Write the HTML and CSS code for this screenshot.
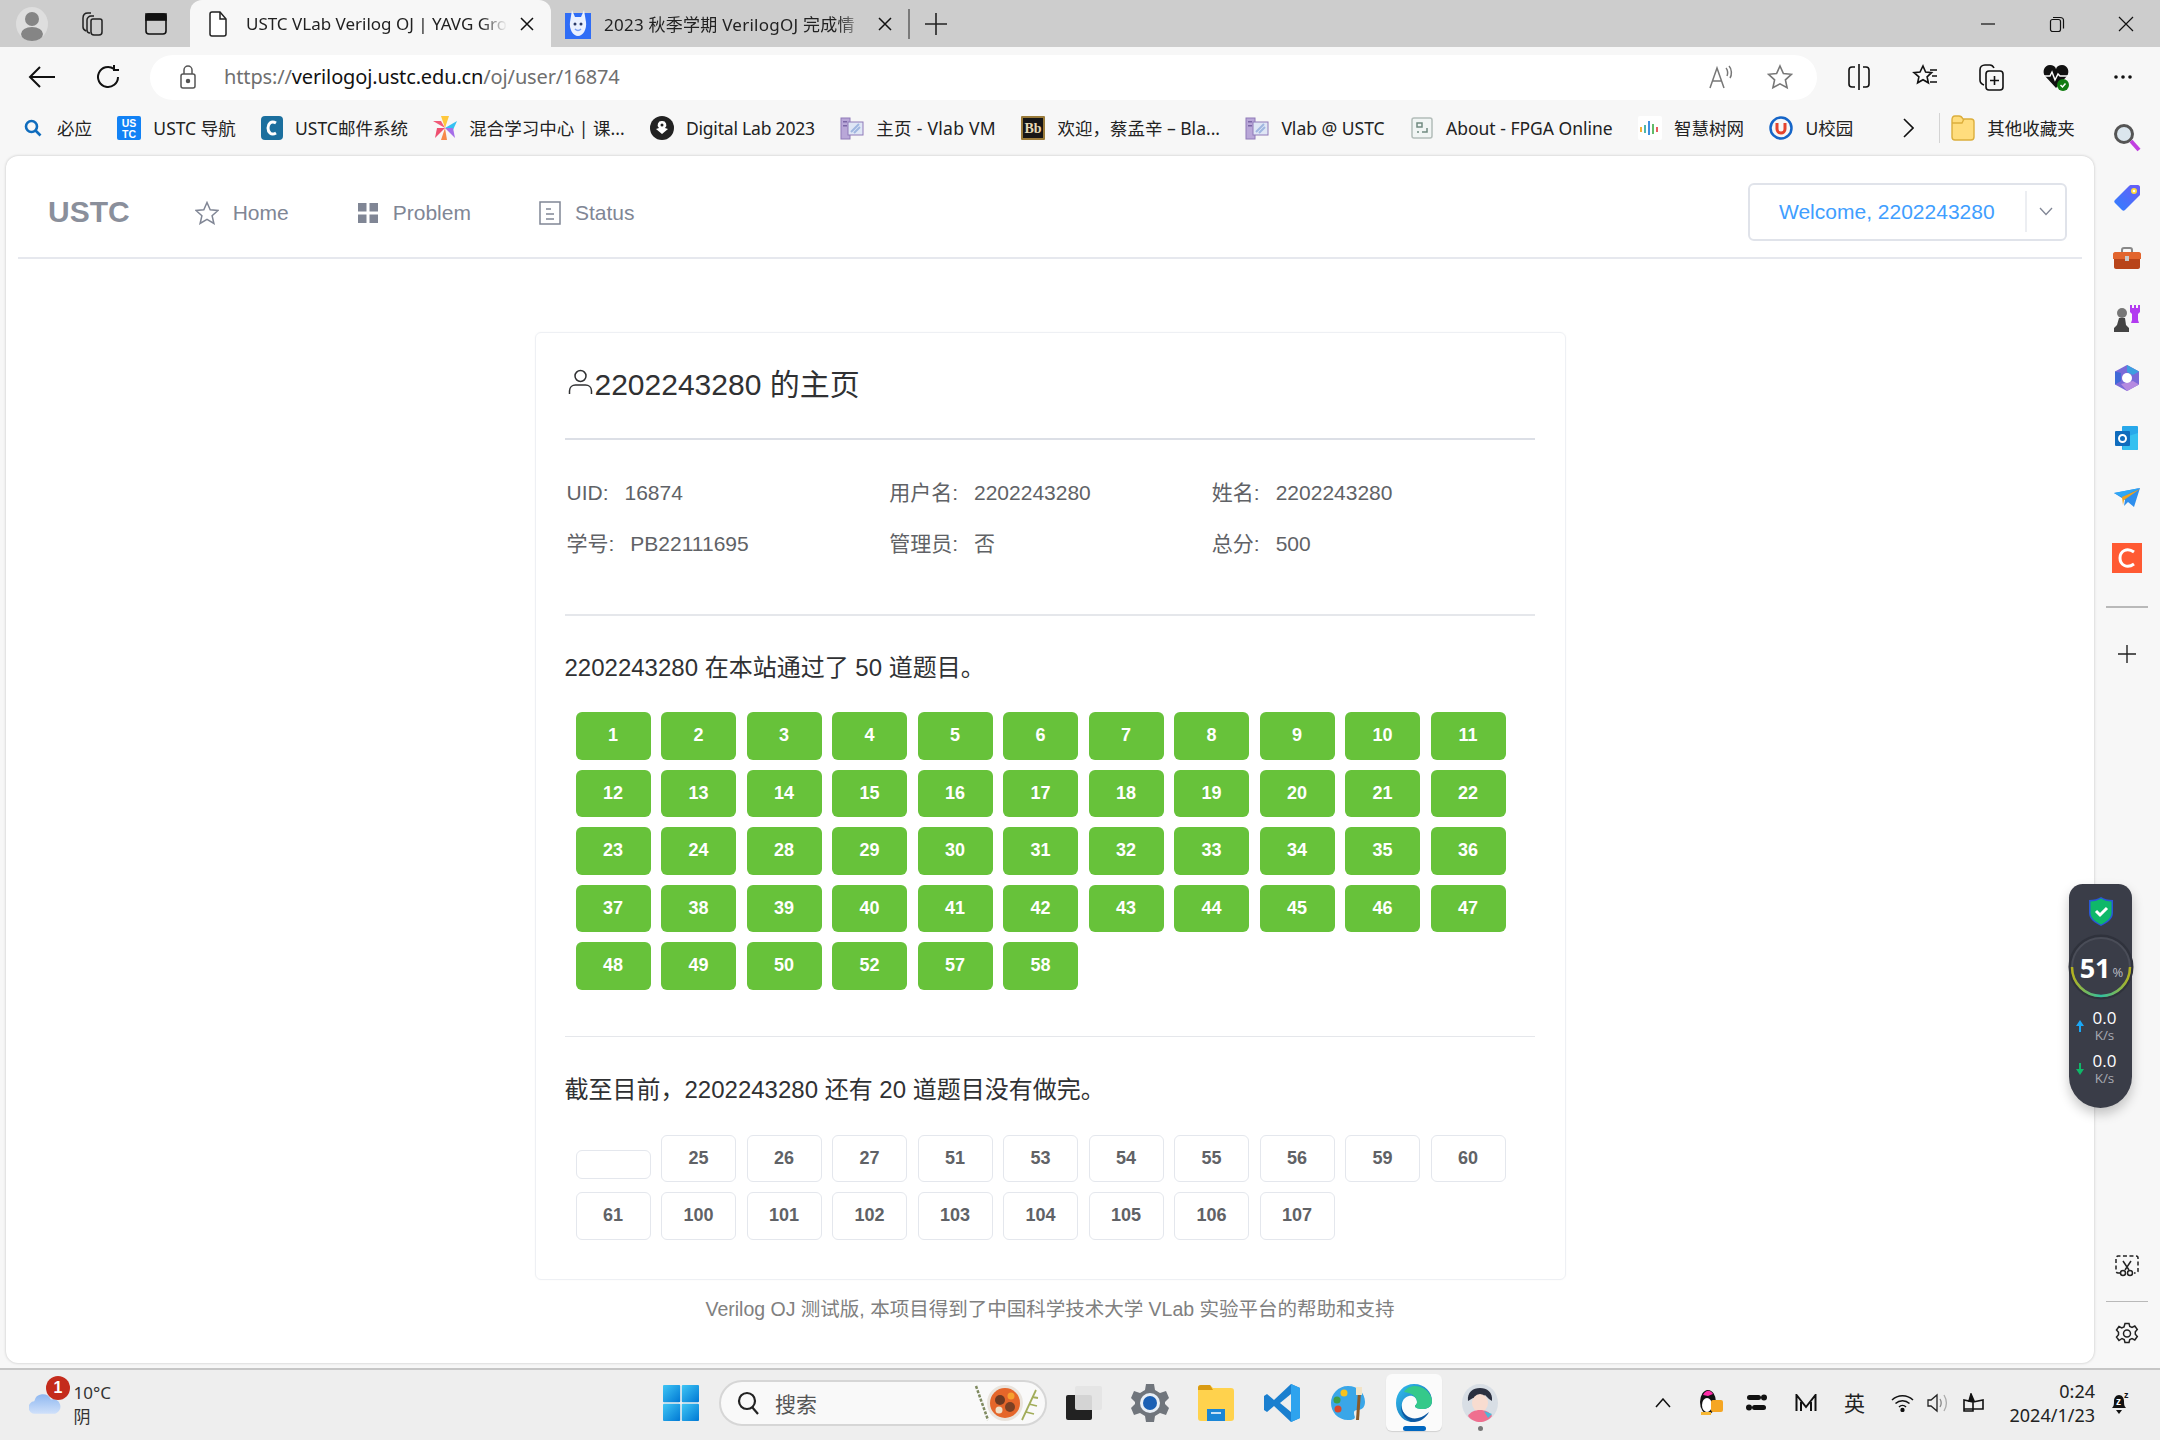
FILE: index.html
```html
<!DOCTYPE html>
<html lang="zh-CN">
<head>
<meta charset="utf-8">
<title>USTC VLab Verilog OJ</title>
<link rel="stylesheet" href="styles.css">
</head>
<body>
<svg class="defs" width="0" height="0">
  <symbol id="pc" viewBox="0 0 24 24"><rect x="1" y="2" width="9" height="21" fill="#b9a7d8" stroke="#8f7ab8"/><rect x="8" y="6" width="15" height="13" fill="#dfe6f5" stroke="#8f7ab8"/><path d="M11 16l8-8M14 17l6-6" stroke="#9fb6e0" stroke-width="2"/><rect x="3" y="5" width="4" height="1.5" fill="#7b66a6"/><rect x="3" y="9" width="4" height="1.5" fill="#7b66a6"/></symbol>
</svg>

<header class="tabbar">
  <div class="avatar"><svg width="32" height="34" viewBox="0 0 32 34"><ellipse cx="16" cy="17" rx="16" ry="17" fill="#dedede"/><circle cx="16" cy="12" r="7" fill="#858585"/><ellipse cx="16" cy="27" rx="11" ry="7" fill="#858585"/></svg></div>
  <svg class="tb-ic tabs-ic" width="24" height="26" viewBox="0 0 24 26" fill="none" stroke="#222" stroke-width="1.5"><path d="M3 7c0-3 2-5 5-5h3M3 7v9c0 2 1 3 3 4M7 9c0-2 2-4 4-4h3M7 9v10c0 2 1 3 3 3"/><path d="M11 10c0-1 1-2 2-2h7c1 0 2 1 2 2v11c0 2-1 3-3 3h-5c-2 0-3-1-3-3z"/></svg>
  <svg class="tb-ic win-ic" width="24" height="26" viewBox="0 0 24 26" fill="none" stroke="#111" stroke-width="1.6"><rect x="2" y="3" width="20" height="20" rx="3"/><rect x="2" y="3" width="20" height="6" fill="#111"/></svg>
  <div class="tab tab-active">
    <svg width="20" height="26" viewBox="0 0 20 26" fill="#fff" stroke="#222" stroke-width="1.5"><path d="M2 3c0-1 1-2 2-2h8l6 7v15c0 1-1 2-2 2H4c-1 0-2-1-2-2z"/><path d="M12 1v7h6" fill="none"/></svg>
    <span class="tab-title">USTC VLab Verilog OJ | YAVG Gro</span>
    <svg class="tab-x" width="14" height="14" viewBox="0 0 14 14" stroke="#111" stroke-width="1.5"><path d="M1 1l12 12M13 1L1 13"/></svg>
  </div>
  <div class="tab tab-idle">
    <svg width="26" height="30" viewBox="0 0 26 30"><rect y="4" width="26" height="26" fill="#2f6df6"/><path d="M7 1l3 7h6l3-7 2 12c1 7-3 14-8 14S4 20 5 13z" fill="#eaf1ff"/><circle cx="10" cy="15" r="1.500" fill="#2b3a67"/><circle cx="16" cy="15" r="1.500" fill="#2b3a67"/><path d="M10 20c2 2 4 2 6 0" fill="none" stroke="#7aa0f5" stroke-width="1.500"/></svg>
    <span class="tab-title">2023 秋季学期 VerilogOJ 完成情</span>
    <svg class="tab-x" width="14" height="14" viewBox="0 0 14 14" stroke="#111" stroke-width="1.5"><path d="M1 1l12 12M13 1L1 13"/></svg>
  </div>
  <span class="tab-sep"></span>
  <svg class="plus" width="22" height="22" viewBox="0 0 22 22" stroke="#222" stroke-width="1.6"><path d="M11 0v22M0 11h22"/></svg>
  <div class="win-ctl">
    <svg width="16" height="16" viewBox="0 0 16 16" stroke="#111" stroke-width="1.2"><path d="M1 8h14"/></svg>
    <svg width="16" height="16" viewBox="0 0 16 16" fill="none" stroke="#111" stroke-width="1.2"><rect x="1.5" y="3.5" width="10" height="12" rx="2"/><path d="M4 1.500h7c2 0 3.500 1 3.500 3v8"/></svg>
    <svg width="16" height="16" viewBox="0 0 16 16" stroke="#111" stroke-width="1.2"><path d="M1 1l14 14M15 1L1 15"/></svg>
  </div>
</header>

<div class="toolbar">
  <svg class="tool-back" width="28" height="24" viewBox="0 0 28 24" fill="none" stroke="#111" stroke-width="2"><path d="M27 12H2M12 2L2 12l10 10"/></svg>
  <svg class="tool-reload" width="26" height="26" viewBox="0 0 26 26" fill="none" stroke="#111" stroke-width="2"><path d="M22 13a10 10 0 1 1-4-8M18 1v5h5"/></svg>
  <div class="addr">
    <svg class="lock" width="18" height="24" viewBox="0 0 18 24" fill="none" stroke="#555" stroke-width="1.5"><rect x="2" y="9" width="14" height="14" rx="2"/><path d="M5 9V5a4 4 0 0 1 8 0v4"/><circle cx="9" cy="16" r="1.500" fill="#555"/></svg>
    <div class="url"><span class="url-dim">https://</span>verilogoj.ustc.edu.cn<span class="url-dim">/oj/user/16874</span></div>
    <svg class="read-ic" width="26" height="24" viewBox="0 0 26 24" fill="none" stroke="#777" stroke-width="1.5"><path d="M2 23L9 3l7 20M5 16h8M18 3c2 2 2 6 1 8M21 1c3 3 3 9 1 12"/></svg>
    <svg class="fav-ic" width="26" height="26" viewBox="0 0 26 26" fill="none" stroke="#777" stroke-width="1.6"><path d="M13 2l3.400 7.500 8 .8-6 5.500 1.700 8L13 19.800 5.900 23.800l1.700-8-6-5.500 8-.8z"/></svg>
  </div>
  <div class="tool-right">
    <svg width="24" height="28" viewBox="0 0 24 28" fill="none" stroke="#111" stroke-width="1.6"><path d="M8 4H5C3 4 2 5 2 7v14c0 2 1 3 3 3h3M16 4h3c2 0 3 1 3 3v14c0 2-1 3-3 3h-3"/><path d="M12 1v26"/></svg>
    <svg width="26" height="26" viewBox="0 0 26 26" fill="none" stroke="#111" stroke-width="1.6"><path d="M11 2l2.600 6 6 .6-4.500 4.200 1.300 6-5.400-3.100-5.400 3.100 1.300-6L2 8.600l6-.6zM18 6h7M20 12h5M18 18h7"/></svg>
    <svg width="26" height="28" viewBox="0 0 26 28" fill="none" stroke="#111" stroke-width="1.6"><path d="M6 22c-3-1-4-3-4-5V7c0-3 2-5 5-5h5c2 0 3 1 4 3"/><rect x="8" y="8" width="17" height="19" rx="3"/><path d="M16.500 13v9M12 17.500h9"/></svg>
    <svg width="30" height="30" viewBox="0 0 30 30"><path d="M14 26L3 14C0 10 2 3 8 3c3 0 5 1 6 4 1-3 3-4 6-4 6 0 8 7 5 11z" fill="#111"/><path d="M1 14h7l2-4 3 8 3-6 2 2h10" fill="none" stroke="#fff" stroke-width="1.500"/><circle cx="21" cy="23" r="6" fill="#107c10"/><path d="M18.500 23l2 2 3-3.500" fill="none" stroke="#fff" stroke-width="1.500"/></svg>
    <svg width="20" height="6" viewBox="0 0 20 6" fill="#111"><circle cx="3" cy="3" r="1.800"/><circle cx="10" cy="3" r="1.800"/><circle cx="17" cy="3" r="1.800"/></svg>
  </div>
</div>

<div class="workspace">
  <div class="browser-main">
    <nav class="bookmarks">
      <a class="bm bm-bing"><svg width="18" height="18" viewBox="0 0 18 18" fill="none" stroke="#0f6cbd" stroke-width="2.600"><circle cx="7.500" cy="7.500" r="5.500"/><path d="M11.500 11.500l5 5"/></svg>必应</a>
      <a class="bm"><svg width="24" height="24" viewBox="0 0 24 24"><rect width="24" height="24" rx="2" fill="#1282f5"/><text x="12" y="11" class="t-ustc">US</text><text x="12" y="22" class="t-ustc">TC</text></svg>USTC 导航</a>
      <a class="bm"><svg width="22" height="24" viewBox="0 0 22 24"><rect width="22" height="24" rx="4" fill="#1b6f9e"/><path d="M15 7c-5-3-8 1-8 5s3 8 8 5" fill="none" stroke="#fff" stroke-width="3"/></svg>USTC邮件系统</a>
      <a class="bm"><svg width="24" height="24" viewBox="0 0 24 24"><path d="M12 12L8 0h8z" fill="#ffc83d"/><path d="M12 12L24 5l-4 9z" fill="#35c1f1"/><path d="M12 12l8 0 2 10z" fill="#a56ee8"/><path d="M12 12l2 12H8z" fill="#f7894a"/><path d="M12 12L2 22l2-10z" fill="#ee4f6f"/><path d="M12 12L0 5l8 0z" fill="#f05a78"/></svg>混合学习中心 | 课...</a>
      <a class="bm bm-tight"><svg width="24" height="24" viewBox="0 0 24 24"><circle cx="12" cy="12" r="12" fill="#222"/><path d="M12 5a4 4 0 0 1 3 7l3 1-6 5-6-5 3-1a4 4 0 0 1 3-7z" fill="#fff"/><circle cx="12" cy="9" r="1.500" fill="#222"/></svg>Digital Lab 2023</a>
      <a class="bm bm-wide"><svg width="24" height="24"><use href="#pc"/></svg>主页 - Vlab VM</a>
      <a class="bm"><svg width="24" height="24" viewBox="0 0 24 24"><rect width="24" height="24" rx="1" fill="#9a7b3a"/><rect x="2" y="2" width="20" height="20" fill="#161616"/><text x="12" y="17" class="t-bb">Bb</text></svg>欢迎，蔡孟辛 – Bla...</a>
      <a class="bm"><svg width="24" height="24"><use href="#pc"/></svg>Vlab @ USTC</a>
      <a class="bm"><svg width="24" height="24" viewBox="0 0 24 24" fill="none"><rect x="2" y="2" width="20" height="20" rx="2" fill="#f1f5f4" stroke="#b3bdb9" stroke-width="1.500"/><path d="M7 7h5v4H7zM12 16h5v-4M7 16h2" stroke="#708a80" stroke-width="1.500"/></svg>About - FPGA Online</a>
      <a class="bm"><svg width="24" height="24" viewBox="0 0 24 24"><rect width="24" height="24" rx="2" fill="#fff"/><rect x="2" y="11" width="2" height="5" fill="#f2b134"/><rect x="6" y="9" width="2" height="8" fill="#4db6ac"/><rect x="10" y="5" width="2" height="14" fill="#3f8fe0"/><rect x="14" y="8" width="2" height="10" fill="#63bb6a"/><rect x="18" y="11" width="2" height="5" fill="#e85d5d"/></svg>智慧树网</a>
      <a class="bm"><svg width="24" height="24" viewBox="0 0 24 24" fill="none"><circle cx="12" cy="12" r="10.500" stroke="#1565c8" stroke-width="2.500"/><path d="M8 7v6a4 4 0 0 0 8 0V7" stroke="#e4432d" stroke-width="3"/></svg>U校园</a>
      <svg class="bm-more" width="12" height="20" viewBox="0 0 12 20" fill="none" stroke="#111" stroke-width="1.600"><path d="M2 1l9 9-9 9"/></svg>
      <span class="bm-sep"></span>
      <a class="bm bm-folder"><svg width="24" height="26" viewBox="0 0 24 26"><path d="M1 5c0-2 1-4 3-4h4c2 0 3 1 4 3h8c2 0 3 1 3 3v15c0 2-1 3-3 3H4c-2 0-3-1-3-3z" fill="#ffdd7d" stroke="#dcae3c" stroke-width="1.400"/><path d="M1 8h10l2-4" fill="none" stroke="#dcae3c" stroke-width="1.400"/></svg>其他收藏夹</a>
    </nav>

    <main class="panel">
      <div class="site-nav">
        <div class="logo">USTC</div>
        <a class="nav-item"><svg width="24" height="24" viewBox="0 0 24 24" fill="none" stroke="#808695" stroke-width="1.500"><path d="M12 1.500l3.200 7.200 7.800.8-5.900 5.200 1.800 7.800L12 18.400l-6.900 4.100 1.800-7.800L1 9.500l7.800-.8z"/></svg>Home</a>
        <a class="nav-item"><svg class="nav-ic-sm" width="22" height="22" viewBox="0 0 22 22" fill="#808695"><rect x="1" y="1" width="8.500" height="8.500"/><rect x="12.500" y="1" width="8.500" height="8.500"/><rect x="1" y="12.500" width="8.500" height="8.500"/><rect x="12.500" y="12.500" width="8.500" height="8.500"/></svg>Problem</a>
        <a class="nav-item"><svg class="nav-ic-sm" width="22" height="24" viewBox="0 0 22 24" fill="none" stroke="#808695" stroke-width="1.500"><rect x="1" y="1" width="20" height="22"/><path d="M7 8h5M7 13h8M7 18h8"/></svg>Status</a>
        <div class="welcome">
          <span class="welcome-name">Welcome, 2202243280</span>
          <span class="welcome-caret"><svg width="14" height="9" viewBox="0 0 14 9" fill="none" stroke="#808695" stroke-width="1.300"><path d="M1 1l6 6.500L13 1"/></svg></span>
        </div>
      </div>

      <section class="card">
        <h1 class="card-title"><svg width="25" height="26" viewBox="0 0 25 26" fill="none" stroke="#303133" stroke-width="1.500"><circle cx="12.500" cy="7" r="5.500"/><path d="M1.500 25v-3c0-4 3-6 6-6h10c3 0 6 2 6 6v3"/></svg>2202243280 的主页</h1>
        <hr class="rule rule-strong">
        <dl class="info">
          <div class="info-item"><dt>UID:</dt><dd>16874</dd></div>
          <div class="info-item"><dt>用户名:</dt><dd>2202243280</dd></div>
          <div class="info-item"><dt>姓名:</dt><dd>2202243280</dd></div>
          <div class="info-item"><dt>学号:</dt><dd>PB22111695</dd></div>
          <div class="info-item"><dt>管理员:</dt><dd>否</dd></div>
          <div class="info-item"><dt>总分:</dt><dd>500</dd></div>
        </dl>
        <hr class="rule rule-a">
        <h2 class="sec-title">2202243280 在本站通过了 50 道题目。</h2>
        <div class="problems">
          <a class="pb done">1</a><a class="pb done">2</a><a class="pb done">3</a><a class="pb done">4</a><a class="pb done">5</a><a class="pb done">6</a><a class="pb done">7</a><a class="pb done">8</a><a class="pb done">9</a><a class="pb done">10</a><a class="pb done">11</a>
          <a class="pb done">12</a><a class="pb done">13</a><a class="pb done">14</a><a class="pb done">15</a><a class="pb done">16</a><a class="pb done">17</a><a class="pb done">18</a><a class="pb done">19</a><a class="pb done">20</a><a class="pb done">21</a><a class="pb done">22</a>
          <a class="pb done">23</a><a class="pb done">24</a><a class="pb done">28</a><a class="pb done">29</a><a class="pb done">30</a><a class="pb done">31</a><a class="pb done">32</a><a class="pb done">33</a><a class="pb done">34</a><a class="pb done">35</a><a class="pb done">36</a>
          <a class="pb done">37</a><a class="pb done">38</a><a class="pb done">39</a><a class="pb done">40</a><a class="pb done">41</a><a class="pb done">42</a><a class="pb done">43</a><a class="pb done">44</a><a class="pb done">45</a><a class="pb done">46</a><a class="pb done">47</a>
          <a class="pb done">48</a><a class="pb done">49</a><a class="pb done">50</a><a class="pb done">52</a><a class="pb done">57</a><a class="pb done">58</a>
        </div>
        <hr class="rule rule-b">
        <h2 class="sec-title sec-title-b">截至目前，2202243280 还有 20 道题目没有做完。</h2>
        <div class="problems">
          <a class="pb todo empty"></a><a class="pb todo">25</a><a class="pb todo">26</a><a class="pb todo">27</a><a class="pb todo">51</a><a class="pb todo">53</a><a class="pb todo">54</a><a class="pb todo">55</a><a class="pb todo">56</a><a class="pb todo">59</a><a class="pb todo">60</a>
          <a class="pb todo">61</a><a class="pb todo">100</a><a class="pb todo">101</a><a class="pb todo">102</a><a class="pb todo">103</a><a class="pb todo">104</a><a class="pb todo">105</a><a class="pb todo">106</a><a class="pb todo">107</a>
        </div>
      </section>
      <footer class="foot">Verilog OJ 测试版, 本项目得到了中国科学技术大学 VLab 实验平台的帮助和支持</footer>
    </main>
  </div>

  <aside class="sidebar">
    <div class="side-slot"><svg width="28" height="30" viewBox="0 0 28 30" fill="none"><circle cx="11" cy="11" r="8.500" fill="#dbe6ee" stroke="#555" stroke-width="3"/><path d="M18 18l8 9" stroke="#c13fe0" stroke-width="4"/></svg></div>
    <div class="side-slot"><svg width="26" height="26" viewBox="0 0 26 26"><defs><linearGradient id="gt" x1="0" y1="1" x2="1" y2="0"><stop offset="0" stop-color="#2f80ff"/><stop offset="1" stop-color="#6a5cf6"/></linearGradient></defs><path d="M1 15L15 1c1-1 1-1 2-1h7c1 0 2 1 2 2v7c0 1 0 1-1 2L11 25c-1 1-2 1-3 0l-7-7c-1-1-1-2 0-3z" fill="url(#gt)"/><circle cx="20" cy="6" r="3" fill="#ffd93b"/><circle cx="20" cy="6" r="1.300" fill="#fff"/></svg></div>
    <div class="side-slot"><svg width="28" height="22" viewBox="0 0 28 22"><path d="M9 5V3c0-1 1-2 2-2h6c1 0 2 1 2 2v2" fill="none" stroke="#888" stroke-width="2"/><path d="M0 7c0-1 1-2 2-2h24c1 0 2 1 2 2v5H0z" fill="#e2652e"/><path d="M1 12h26v8c0 1-1 2-2 2H3c-1 0-2-1-2-2z" fill="#b8441a"/><rect x="12" y="9" width="4" height="5" fill="#c9c9c9"/></svg></div>
    <div class="side-slot"><svg width="28" height="28" viewBox="0 0 28 28"><path d="M17 1h2v3h2V1h2v3h2V1h2v7l-2 2v6l1 3H18l1-3v-6l-2-2z" fill="#b23cf0"/><circle cx="9" cy="9" r="5" fill="#777"/><path d="M6 14h6l1 7 3 3v4H1v-4l3-3z" fill="#444"/></svg></div>
    <div class="side-slot"><svg width="24" height="26" viewBox="0 0 24 26"><path d="M12 0l12 6.500v13L12 26 0 19.500v-13z" fill="#7a6ad8"/><path d="M12 0l12 6.500-6 3.500-6-3z" fill="#3d9fe0"/><path d="M0 6.500v13l6-3.500V8z" fill="#3f6ad8"/><path d="M12 26L24 19.500 18 16 6 19z" fill="#b58ae0"/><circle cx="12" cy="13" r="5" fill="#fff"/></svg></div>
    <div class="side-slot"><svg width="24" height="24" viewBox="0 0 24 24"><rect x="7" y="0" width="16" height="24" rx="1" fill="#28a8ea"/><path d="M7 12l16-5v15c0 1-1 2-2 2H8z" fill="#35c0f0"/><rect x="0" y="5" width="15" height="15" rx="1" fill="#0f6cbd"/><circle cx="7.500" cy="12.500" r="3.500" fill="none" stroke="#fff" stroke-width="2"/></svg></div>
    <div class="side-slot"><svg width="26" height="20" viewBox="0 0 26 20"><path d="M0 5L26 0 20 19l-6-5-4 4 1-6z" fill="#2f8fed"/><path d="M0 5L26 0 8 9z" fill="#2fa7f5"/><path d="M8 9L26 1 10 12l-1 5z" fill="#f0a31c"/></svg></div>
    <div class="side-slot"><svg width="30" height="30" viewBox="0 0 30 30"><rect width="30" height="30" fill="#ff5a33"/><path d="M22 9c-7-5-14-1-14 6s7 11 14 6" fill="none" stroke="#fff" stroke-width="3"/></svg></div>
    <span class="side-rule side-rule-a"></span>
    <svg class="side-plus" width="18" height="18" viewBox="0 0 18 18" stroke="#222" stroke-width="1.400"><path d="M9 0v18M0 9h18"/></svg>
    <svg class="side-cut" width="24" height="22" viewBox="0 0 24 22" fill="none" stroke="#222" stroke-width="1.500"><path d="M5 18H3c-1 0-2-1-2-2V3c0-1 1-2 2-2h18c1 0 2 1 2 2v13c0 1-1 2-2 2h-2" stroke-dasharray="4 2.500"/><path d="M8 6l6 9M16 6l-6 9"/><circle cx="8" cy="18" r="2.500"/><circle cx="15" cy="18" r="2.500"/></svg>
    <span class="side-rule side-rule-b"></span>
    <svg class="side-gear" width="24" height="24" viewBox="0 0 24 24" fill="none" stroke="#222" stroke-width="1.500"><path d="M10 1.500h4l.8 3 2.200 1 2.800-1.500 2.500 3.500-2 2.300v2.400l2 2.300-2.500 3.500-2.800-1.500-2.200 1-.8 3h-4l-.8-3-2.200-1L4 18.500 1.500 15l2-2.300v-2.400l-2-2.300L4 4.500 6.800 6l2.200-1z"/><circle cx="12" cy="11.500" r="3.500"/></svg>
  </aside>
</div>

<footer class="taskbar">
  <div class="weather">
    <svg class="cloud" width="36" height="22" viewBox="0 0 36 22"><defs><linearGradient id="gc" x1="0" y1="0" x2="0" y2="1"><stop offset="0" stop-color="#8fb8f0"/><stop offset="1" stop-color="#cfe0fa"/></linearGradient></defs><path d="M7 22a7 7 0 0 1-1-14 10 10 0 0 1 19-2 8 8 0 0 1 5 16z" fill="url(#gc)"/></svg>
    <span class="badge">1</span>
    <div class="weather-text"><span>10°C</span><span>阴</span></div>
  </div>
  <svg class="start" width="36" height="36" viewBox="0 0 36 36"><defs><linearGradient id="gw" x1="0" y1="0" x2="1" y2="1"><stop offset="0" stop-color="#3fc6f5"/><stop offset="1" stop-color="#0078d4"/></linearGradient></defs><rect width="17.200" height="17.200" rx="1" fill="url(#gw)"/><rect x="18.800" width="17.200" height="17.200" rx="1" fill="url(#gw)"/><rect y="18.800" width="17.200" height="17.200" rx="1" fill="url(#gw)"/><rect x="18.800" y="18.800" width="17.200" height="17.200" rx="1" fill="url(#gw)"/></svg>
  <div class="search">
    <svg width="22" height="24" viewBox="0 0 22 24" fill="none" stroke="#222" stroke-width="2.200"><circle cx="10" cy="10" r="8"/><path d="M15 16l6 7"/></svg>
    <span class="search-text">搜索</span>
    <svg class="food" width="66" height="38" viewBox="0 0 66 38"><path d="M2 2l12 34" stroke="#7f8a60" stroke-width="2.500" fill="none" stroke-dasharray="3 1.500"/><path d="M48 36l14-30M52 28l8 2M55 20l8 2M58 13l6 1" stroke="#a2ad5a" stroke-width="1.800" fill="none"/><circle cx="31" cy="19" r="18" fill="#e9e4dd"/><circle cx="31" cy="19" r="15" fill="#e5662a"/><circle cx="26" cy="16" r="5" fill="#6d3a22"/><circle cx="36" cy="23" r="5" fill="#7a4024"/><circle cx="37" cy="12" r="3.500" fill="#f7a02e"/><circle cx="25" cy="26" r="3.500" fill="#efe0c8"/></svg>
  </div>
  <svg class="taskview" width="36" height="34" viewBox="0 0 36 34"><rect x="0" y="9" width="26" height="25" rx="2" fill="#222"/><rect x="9" y="0" width="27" height="24" rx="2" fill="#e4e4e4" opacity=".92"/></svg>
  <div class="task-slot"><svg width="38" height="40" viewBox="0 0 38 40"><path d="M15 1h8l1 6 5 3 6-2 3 7-4 4v2l4 4-3 7-6-2-5 3-1 6h-8l-1-6-5-3-6 2-3-7 4-4v-2l-4-4 3-7 6 2 5-3z" fill="#70757c"/><circle cx="19" cy="20" r="10" fill="#e8eef5"/><circle cx="19" cy="20" r="7" fill="#1a5fb4"/></svg></div>
  <div class="task-slot"><svg width="36" height="36" viewBox="0 0 36 36"><path d="M0 3c0-2 1-3 3-3h9l3 3h18c2 0 3 1 3 3v27c0 2-1 3-3 3H3c-2 0-3-1-3-3z" fill="#ffd24d"/><path d="M0 3c0-2 1-3 3-3h9l3 5H0z" fill="#d99a12"/><path d="M9 24h18v12H9z" fill="#1a86d6" /><path d="M13 28h10" stroke="#fff" stroke-width="1.500"/></svg></div>
  <div class="task-slot"><svg width="36" height="38" viewBox="0 0 36 38"><path d="M27 0l9 4v30l-9 4L10 22 3 28l-3-2V12l3-2 7 6z" fill="#1a7fcf"/><path d="M27 10L16 19l11 9z" fill="#eeeeee"/><path d="M27 0l9 4v30l-9 4z" fill="#2ea3ee"/></svg></div>
  <div class="task-slot"><svg width="36" height="36" viewBox="0 0 36 36"><path d="M18 1c10 0 17 7 17 16 0 6-4 8-7 8-2 0-4 0-4 3 0 3 2 4 0 6-2 1-4 1-6 1C8 35 1 27 1 18S8 1 18 1z" fill="#3aa6e8"/><circle cx="14" cy="8" r="3.500" fill="#f7c21e"/><circle cx="7" cy="15" r="3.500" fill="#3f9e46"/><circle cx="8" cy="24" r="3.500" fill="#d9472b"/><path d="M28 6l3 1-2 28h-3z" fill="#8a5a2b"/><path d="M26 2l6 0 0 8-6 0z" fill="#f2e3c6"/></svg></div>
  <div class="task-slot task-active"><svg width="36" height="38" viewBox="0 0 36 38"><defs><linearGradient id="ge" x1="0" y1="0" x2="1" y2="1"><stop offset="0" stop-color="#35c1f1"/><stop offset="1" stop-color="#0c59a4"/></linearGradient></defs><path d="M18 0c11 0 18 8 18 17 0 6-5 8-9 8-5 0-8-1-8-3 0-1 2-1 2-4 0-4-4-7-8-6-5 1-8 6-7 12 1 8 8 14 15 14C8 40 0 30 0 19S8 0 18 0z" fill="url(#ge)"/><path d="M8 8c3-6 12-8 19-4 6 3 9 9 9 13 0 6-5 8-9 8-5 0-8-1-8-3 0-1 2-1 2-4 0-5-5-9-13-10z" fill="#35c98a"/><path d="M33 28c-3 6-9 10-15 10-6 0-14-7-13-17 1 10 10 15 17 13 5-1 8-4 11-6z" fill="#0c59a4"/></svg><span class="task-bar"></span></div>
  <div class="task-slot"><svg width="36" height="38" viewBox="0 0 36 38"><ellipse cx="18" cy="19" rx="18" ry="19" fill="#d8dee5"/><path d="M6 17C5 8 11 4 18 4s13 4 12 13l-3-2-4-4-5 4-7-1z" fill="#2b3040"/><ellipse cx="18" cy="19" rx="8" ry="9" fill="#f8dcd0"/><path d="M6 32c2-4 7-6 12-6s10 2 12 6c-3 4-8 6-12 6s-9-2-12-6z" fill="#ef6f8f"/><path d="M22 27l8 3-4 4z" fill="#4bb8d8"/></svg><span class="task-dot"></span></div>

  <div class="tray">
    <svg class="tr-caret" width="16" height="10" viewBox="0 0 16 10" fill="none" stroke="#111" stroke-width="1.500"><path d="M1 9l7-8 7 8"/></svg>
    <svg class="tr-qq" width="26" height="25" viewBox="0 0 26 25"><ellipse cx="10" cy="12" rx="8" ry="12" fill="#111"/><path d="M5 5c3-6 8-5 10-1l-5 2z" fill="#ff2ca8"/><ellipse cx="9" cy="15" rx="5" ry="7" fill="#fff"/><rect x="13" y="10" width="12" height="12" rx="2" fill="#f5a623"/><path d="M3 22h10v3H3z" fill="#f7b733"/></svg>
    <svg class="tr-sw" width="21" height="17" viewBox="0 0 21 17" fill="#111"><rect x="1" y="1" width="14" height="5" rx="2.500"/><circle cx="18" cy="3.500" r="3"/><rect x="6" y="11" width="14" height="5" rx="2.500"/><circle cx="3" cy="13.500" r="3"/></svg>
    <svg class="tr-m" width="22" height="17" viewBox="0 0 22 17" fill="none" stroke="#111" stroke-width="2"><path d="M1.500 17V1l9.500 12L20.500 1v16M6 8v9M16 8v9"/></svg>
    <span class="ime">英</span>
    <svg class="tr-wifi" width="23" height="19" viewBox="0 0 23 19" fill="none" stroke="#111" stroke-width="1.500"><path d="M1 7a15 15 0 0 1 21 0M4.500 10.500a10 10 0 0 1 14 0M8 14a5 5 0 0 1 7 0"/><circle cx="11.500" cy="17" r="1.400" fill="#111"/></svg>
    <svg class="tr-vol" width="22" height="20" viewBox="0 0 22 20" fill="none" stroke="#222" stroke-width="1.300"><path d="M1 7h3l6-5v16l-6-5H1z"/><path d="M13 6c1.500 2.500 1.500 5.500 0 8" stroke="#888"/><path d="M17 2c3 5 3 11 0 16" stroke="#aaa"/></svg>
    <svg class="tr-bat" width="23" height="20" viewBox="0 0 23 20" fill="none" stroke="#111" stroke-width="1.600"><path d="M2 18V7l9 2v9zM11 9l10-2v9H2"/><path d="M7 8l2-7 3 7z" fill="#111"/></svg>
  </div>
  <div class="clock"><span>0:24</span><span>2024/1/23</span></div>
  <svg class="bell" width="20" height="24" viewBox="0 0 20 24"><path d="M1 17c2-2 2-4 2-7 0-3 2-6 5-6s5 3 5 6c0 3 0 5 2 7z" fill="#111"/><path d="M5 19h6l-3 4z" fill="#111"/><text x="5" y="14" class="t-z">z</text><text x="13" y="7" class="t-z2">z</text></svg>
</footer>

<div class="monitor">
  <svg width="24" height="29" viewBox="0 0 24 29"><path d="M12 0c3 2 7 3 12 3v13c0 6-6 10-12 13C6 26 0 22 0 16V3c5 0 9-1 12-3z" fill="#2956d8"/><path d="M12 1.500c3 2 6.500 3 10.500 3V16c0 5-5 9-10.500 11.500C6.500 25 1.500 21 1.500 16V4.500c4 0 7.500-1 10.500-3z" fill="#0fb869"/><path d="M7 14l4 4 7-7" fill="none" stroke="#fff" stroke-width="3"/></svg>
  <div class="gauge">
    <svg width="66" height="66" viewBox="0 0 66 66"><defs><linearGradient id="gg" x1="0" y1="0" x2="1" y2="0"><stop offset="0" stop-color="#b5b21e"/><stop offset=".5" stop-color="#2fc0a0"/><stop offset="1" stop-color="#b5b21e"/></linearGradient></defs><circle cx="33" cy="33" r="32.500" fill="#2f323c"/><circle cx="33" cy="33" r="29" fill="#3a3d48" stroke="#4a4d58" stroke-width="2"/><path d="M4 33a29 29 0 0 0 58 0" fill="none" stroke="url(#gg)" stroke-width="2.500"/></svg>
    <span class="gauge-val">51<small>%</small></span>
  </div>
  <div class="rate"><svg width="8" height="12" viewBox="0 0 8 12" fill="#1ba7f5"><path d="M4 0l4 6H5v6H3V6H0z"/></svg><div class="rate-val">0.0<small>K/s</small></div></div>
  <div class="rate"><svg width="8" height="12" viewBox="0 0 8 12" fill="#0fb869"><path d="M4 12L0 6h3V0h2v6h3z"/></svg><div class="rate-val">0.0<small>K/s</small></div></div>
</div>
</body>
</html>
```

FILE: styles.css
```css
* { box-sizing: border-box; }
html, body { margin: 0; padding: 0; }
body {
  width: 2160px;
  height: 1440px;
  overflow: hidden;
  position: relative;
  display: flex;
  flex-direction: column;
  background: #f7f7f7;
  font-family: "Liberation Sans", "Noto Sans CJK SC", sans-serif;
}
.defs { position: absolute; }
a { color: inherit; text-decoration: none; }

/* tab strip */
.tabbar {
  height: 47px;
  flex: none;
  background: #cdcdcd;
  display: flex;
  align-items: center;
  font-family: "Noto Sans", "Noto Sans CJK SC", sans-serif;
  font-size: 17px;
  color: #222;
}
.avatar { margin-left: 16px; width: 32px; height: 34px; display: flex; }
.tabs-ic { margin-left: 32px; }
.win-ic { margin-left: 40px; }
.tab {
  height: 47px;
  display: flex;
  align-items: center;
  flex: none;
}
.tab-active {
  margin-left: 22px;
  width: 361px;
  background: #f7f7f7;
  border-radius: 12px 12px 0 0;
  padding-left: 18px;
}
.tab-idle { width: 357px; padding-left: 14px; }
.tab-title {
  white-space: nowrap;
  width: 261px;
  margin-left: 18px;
  -webkit-mask-image: linear-gradient(90deg, #000 90%, transparent);
  mask-image: linear-gradient(90deg, #000 90%, transparent);
}
.tab-idle .tab-title { margin-left: 13px; letter-spacing: .25px; }
.tab-x { margin-left: 13px; }
.tab-sep { width: 1.500px; height: 30px; background: #7a7a7a; }
.plus { margin-left: 15px; }
.win-ctl { margin-left: auto; display: flex; gap: 53px; padding-right: 26px; }

/* toolbar */
.toolbar {
  height: 60px;
  flex: none;
  display: flex;
  align-items: center;
  background: #f7f7f7;
}
.tool-back { margin-left: 28px; }
.tool-reload { margin-left: 40px; }
.addr {
  margin-left: 28px;
  width: 1667px;
  height: 45px;
  background: #fff;
  border-radius: 23px;
  display: flex;
  align-items: center;
  padding-left: 29px;
}
.url { margin-left: 27px; padding-bottom: 2px; font-size: 20px; font-family: "Noto Sans", sans-serif; color: #111; letter-spacing: -.14px; }
.url-dim { color: #6f6f6f; }
.read-ic { margin-left: auto; }
.fav-ic { margin-left: 33px; margin-right: 24px; }
.tool-right {
  display: grid;
  grid-template-columns: repeat(5, 66px);
  justify-items: center;
  align-items: center;
  margin-left: 9px;
}

/* workspace */
.workspace { flex: 1; display: flex; min-height: 0; }
.browser-main { width: 2097px; display: flex; flex-direction: column; }

/* bookmarks */
.bookmarks {
  height: 43px;
  flex: none;
  display: flex;
  align-items: center;
  gap: 25.350px;
  padding: 0 0 2px 24px;
  font-family: "Noto Sans", "Noto Sans CJK SC", sans-serif;
  font-size: 17.500px;
  color: #222;
}
.bm { display: flex; align-items: center; gap: 12px; white-space: nowrap; }
.bm-bing { gap: 15px; }
.bm-tight { letter-spacing: -.2px; }
.bm-wide { letter-spacing: .3px; }
.t-ustc { font: bold 10.500px "Liberation Sans", sans-serif; fill: #fff; text-anchor: middle; }
.t-bb { font: bold 14px "Liberation Serif", serif; fill: #e4d9b5; text-anchor: middle; }
.bm-more { margin-left: 23px; }
.bm-sep { width: 1px; height: 30px; background: #d4d4d4; }
.bm-folder { margin-left: -14px; }

/* panel */
.panel {
  flex: 1;
  margin: 6px 3px 5px 6px;
  background: #fff;
  border-radius: 12px;
  box-shadow: 0 0 3px rgba(0, 0, 0, .22);
  display: flex;
  flex-direction: column;
  align-items: center;
  min-height: 0;
}
.site-nav {
  width: 2064px;
  height: 103px;
  flex: none;
  display: flex;
  align-items: center;
  gap: 68px;
  padding: 10px 15px 0 30px;
  border-bottom: 2px solid #e6e8ee;
  color: #808695;
  font-size: 21px;
}
.logo { font-size: 30px; font-weight: 700; color: #8a8f9b; margin-right: -3px; }
.nav-item { display: flex; align-items: center; gap: 14px; margin-top: 2px; }
.welcome {
  margin-left: auto;
  width: 319px;
  height: 58px;
  border: 2px solid #e0e3ea;
  border-radius: 6px;
  display: flex;
  align-items: center;
  color: #409eff;
}
.welcome-name { padding-left: 29px; width: 275px; white-space: nowrap; }
.welcome-caret {
  height: 41px;
  flex: 1;
  border-left: 2px solid #eceef2;
  display: flex;
  align-items: center;
  justify-content: center;
}

/* card */
.card {
  margin-top: 73px;
  width: 1031px;
  height: 948px;
  flex: none;
  border: 1px solid #eef0f4;
  border-radius: 6px;
  box-shadow: 0 0 2px rgba(0, 0, 0, .04);
  padding: 28px 30px 0 29px;
}
.card-title {
  display: flex;
  align-items: center;
  gap: 2px;
  height: 42px;
  margin: 0;
  font-size: 30px;
  font-weight: 400;
  color: #303133;
  white-space: nowrap;
  padding-left: 3px;
}
.rule { border: 0; margin: 0; background: #e5e7eb; height: 1.500px; }
.rule-strong { margin-top: 35px; height: 2px; background: #dcdfe6; }
.info {
  margin: 37px 0 0;
  display: grid;
  grid-template-columns: repeat(3, 1fr);
  row-gap: 20px;
  font-size: 21px;
  line-height: 31px;
  color: #606266;
  padding-left: 2px;
}
.info-item { display: flex; gap: 16px; }
.info-item dt, .info-item dd { margin: 0; }
.rule-a { margin-top: 55px; }
.rule-b { margin-top: 46px; }
.sec-title {
  margin: 35px 0 0;
  font-size: 24px;
  font-weight: 400;
  line-height: 34px;
  color: #303133;
  white-space: nowrap;
}
.sec-title-b { margin-top: 36px; }
.problems {
  margin-top: 27.500px;
  padding-left: 11px;
  display: grid;
  grid-template-columns: repeat(11, 75px);
  column-gap: 10.500px;
  row-gap: 10px;
  grid-auto-rows: 47.500px;
  font-size: 18px;
  font-weight: 700;
}
.pb {
  display: flex;
  align-items: center;
  justify-content: center;
  border-radius: 6px;
}
.done { background: #67c23a; color: #fff; }
.todo { background: #fff; border: 1.500px solid #e4e7ed; color: #606266; }
.empty { margin: 15px 0 3px; }
.foot {
  margin-top: 14px;
  font-size: 19.500px;
  line-height: 30px;
  color: #808080;
  white-space: nowrap;
}

/* sidebar */
.sidebar {
  flex: 1;
  display: flex;
  flex-direction: column;
  align-items: center;
  padding: 1px 4px 22px 0;
}
.side-slot { height: 60px; flex: none; display: flex; align-items: center; justify-content: center; }
.side-rule { width: 42px; height: 1.500px; background: #b9b9b9; flex: none; }
.side-rule-a { margin-top: 18px; }
.side-plus { margin-top: 37px; }
.side-cut { margin-top: auto; }
.side-rule-b { margin-top: 24px; }
.side-gear { margin-top: 20px; }

/* taskbar */
.taskbar {
  height: 72px;
  flex: none;
  border-top: 2px solid #c6c6c6;
  background: #eeeeee;
  display: flex;
  align-items: center;
  padding: 0 0 5px 29px;
  font-family: "Noto Sans", "Noto Sans CJK SC", sans-serif;
  color: #222;
}
.weather { position: relative; display: flex; align-items: flex-end; width: 82px; height: 52px; flex: none; }
.cloud { margin: 0 0 14px; }
.badge {
  position: absolute;
  left: 17px;
  top: -1px;
  width: 24px;
  height: 24px;
  border-radius: 50%;
  background: #c42b1c;
  color: #fff;
  font: 700 16px/24px "Liberation Sans", sans-serif;
  text-align: center;
}
.weather-text { display: flex; flex-direction: column; margin-left: 13px; font-size: 17px; line-height: 24px; color: #333; }
.start { margin-left: 552px; flex: none; }
.search {
  margin-left: 20px;
  width: 328px;
  height: 46px;
  background: #f9f9f9;
  border: 2px solid #d6d6d6;
  border-radius: 23px;
  display: flex;
  align-items: center;
  padding-left: 16px;
  flex: none;
}
.search-text { margin-left: 16px; font-size: 21px; color: #555; }
.food { margin-left: auto; margin-right: 5px; }
.taskview { margin-left: 19px; flex: none; }
.task-slot {
  width: 56px;
  height: 57px;
  margin-left: 10px;
  display: flex;
  align-items: center;
  justify-content: center;
  flex: none;
  position: relative;
}
.taskview + .task-slot { margin-left: 20px; }
.task-active { background: #fbfbfb; border-radius: 6px; box-shadow: 0 1px 1px rgba(0, 0, 0, .12); }
.task-bar {
  position: absolute;
  left: 17px;
  bottom: 0;
  width: 23px;
  height: 5px;
  background: #0067c0;
  border-radius: 3px;
}
.task-dot {
  position: absolute;
  left: 26px;
  bottom: 0;
  width: 5px;
  height: 5px;
  background: #777;
  border-radius: 50%;
}
.tray { margin-left: 147px; display: flex; align-items: center; flex: none; }
.tr-qq { margin-left: 27px; }
.tr-sw { margin-left: 22px; }
.tr-m { margin-left: 28px; }
.ime { margin-left: 27px; font-size: 21px; line-height: 24px; color: #222; }
.tr-wifi { margin-left: 26px; }
.tr-vol { margin-left: 13px; }
.tr-bat { margin-left: 13px; }
.clock {
  margin-left: 5px;
  width: 105px;
  display: flex;
  flex-direction: column;
  align-items: flex-end;
  font-size: 18px;
  line-height: 24px;
  flex: none;
  color: #222;
}
.bell { margin-left: 16px; flex: none; }
.t-z { font: 700 10px "Liberation Sans", sans-serif; fill: #fff; }
.t-z2 { font: 700 9px "Liberation Sans", sans-serif; fill: #111; }

/* floating monitor */
.monitor {
  position: absolute;
  left: 2069px;
  top: 884px;
  width: 63px;
  height: 224px;
  background: #3a3d48;
  border-radius: 14px 14px 32px 32px;
  box-shadow: 0 6px 12px rgba(0, 0, 0, .22);
  display: flex;
  flex-direction: column;
  align-items: center;
  padding-top: 13px;
  font-family: "Open Sans", sans-serif;
  color: #fff;
}
.gauge { position: relative; width: 66px; height: 66px; margin-top: 8px; flex: none; }
.gauge-val {
  position: absolute;
  inset: 0;
  display: flex;
  align-items: center;
  justify-content: center;
  font-size: 27px;
  font-weight: 700;
  padding-left: 2px;
}
.gauge-val small { font-size: 13px; font-weight: 400; color: #b9bbc2; margin: 9px 0 0 2px; }
.rate { display: flex; align-items: center; gap: 9px; margin-top: 8px; width: 50px; }
.rate + .rate { margin-top: 7px; }
.rate-val { display: flex; flex-direction: column; align-items: center; font-size: 17px; line-height: 19px; }
.rate-val small { font-size: 13.500px; line-height: 17px; color: #a8aab2; }
```
